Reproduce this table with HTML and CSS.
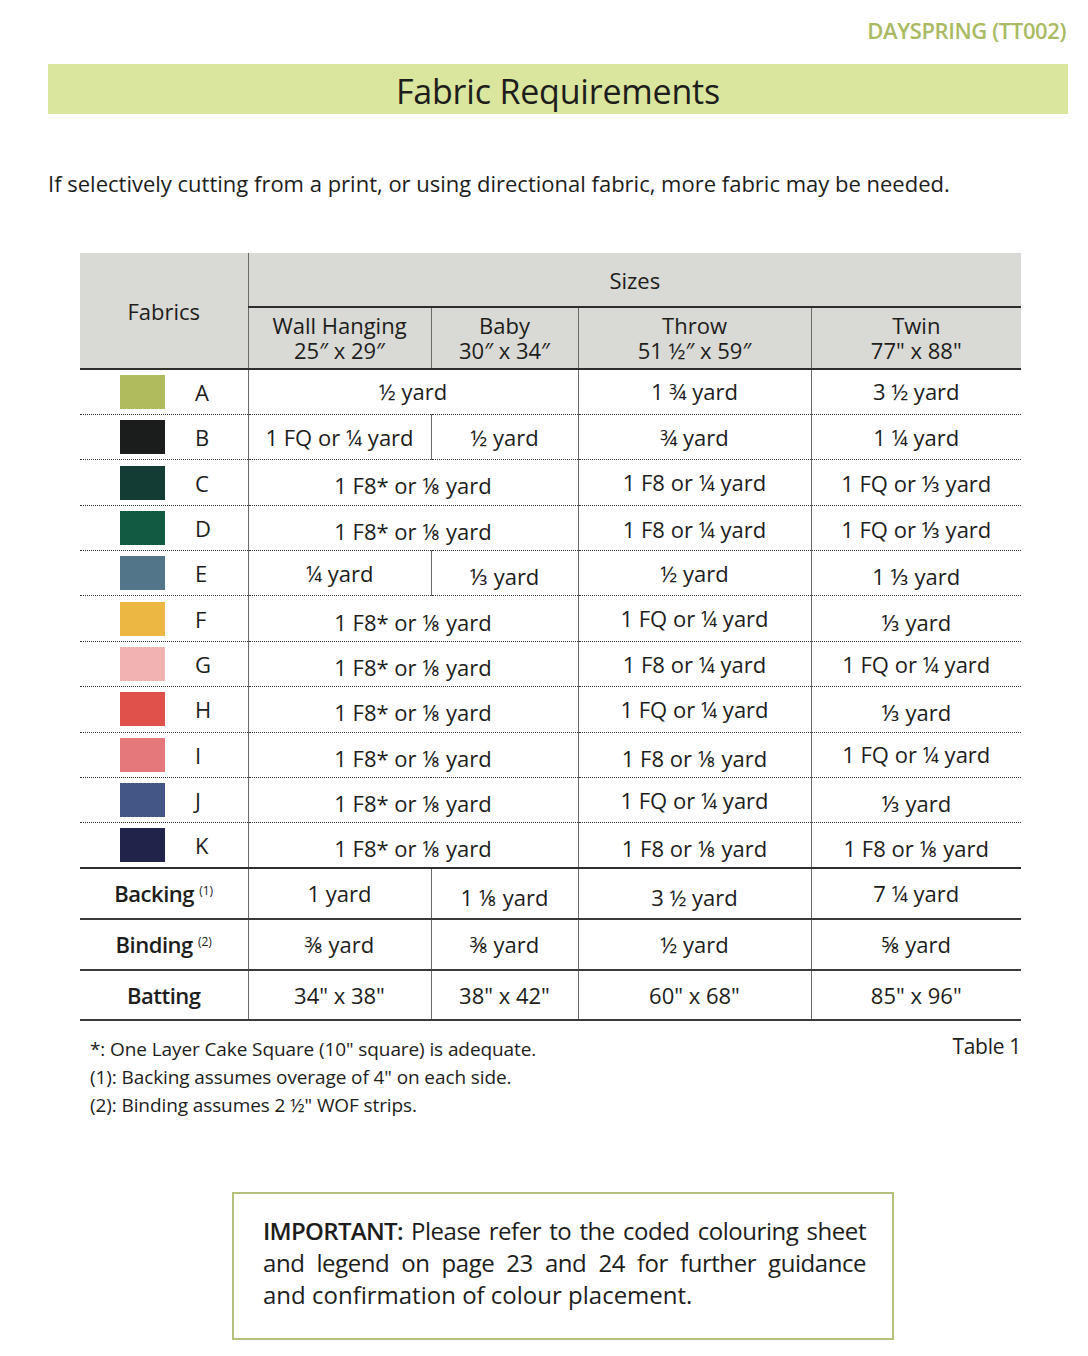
FILE: index.html
```html
<!DOCTYPE html>
<html lang="en">
<head>
<meta charset="utf-8">
<title>Fabric Requirements</title>
<link rel="stylesheet" href="styles.css">
</head>
<body>
<div class="page">
  <div class="brand">DAYSPRING (TT002)</div>
  <h1 class="banner">Fabric Requirements</h1>
  <p class="intro">If selectively cutting from a print, or using directional fabric, more fabric may be needed.</p>

  <table class="req">
    <colgroup>
      <col class="c-fab"><col class="c-wall"><col class="c-baby"><col class="c-throw"><col class="c-twin">
    </colgroup>
    <thead>
      <tr class="h1">
        <th rowspan="2" class="fabh">Fabrics</th>
        <th colspan="4" class="sizes">Sizes</th>
      </tr>
      <tr class="h2">
        <th><span class="hl">Wall Hanging</span><span class="hl">25″ x 29″</span></th>
        <th><span class="hl">Baby</span><span class="hl">30″ x 34″</span></th>
        <th><span class="hl">Throw</span><span class="hl">51 ½″ x 59″</span></th>
        <th><span class="hl">Twin</span><span class="hl">77" x 88"</span></th>
      </tr>
    </thead>
    <tbody>
      <tr class="fr">
        <td class="fab"><span class="sw" style="background:#b0bb5e"></span><span class="lt">A</span></td>
        <td colspan="2">½ yard</td><td>1 ¾ yard</td><td>3 ½ yard</td>
      </tr>
      <tr class="fr">
        <td class="fab"><span class="sw" style="background:#1b1d1d"></span><span class="lt">B</span></td>
        <td class="vl">1 FQ or ¼ yard</td><td>½ yard</td><td>¾ yard</td><td>1 ¼ yard</td>
      </tr>
      <tr class="fr">
        <td class="fab"><span class="sw" style="background:#123c34"></span><span class="lt">C</span></td>
        <td colspan="2" class="dn">1 F8* or ⅛ yard</td><td>1 F8 or ¼ yard</td><td class="dn2">1 FQ or ⅓ yard</td>
      </tr>
      <tr class="fr">
        <td class="fab"><span class="sw" style="background:#135a42"></span><span class="lt">D</span></td>
        <td colspan="2" class="dn">1 F8* or ⅛ yard</td><td class="dn2">1 F8 or ¼ yard</td><td class="dn2">1 FQ or ⅓ yard</td>
      </tr>
      <tr class="fr">
        <td class="fab"><span class="sw" style="background:#52758a"></span><span class="lt">E</span></td>
        <td class="vl">¼ yard</td><td class="dn">⅓ yard</td><td>½ yard</td><td class="dn">1 ⅓ yard</td>
      </tr>
      <tr class="fr">
        <td class="fab"><span class="sw" style="background:#ecb843"></span><span class="lt">F</span></td>
        <td colspan="2" class="dn">1 F8* or ⅛ yard</td><td>1 FQ or ¼ yard</td><td class="dn">⅓ yard</td>
      </tr>
      <tr class="fr">
        <td class="fab"><span class="sw" style="background:#f1b3b2"></span><span class="lt">G</span></td>
        <td colspan="2" class="dn">1 F8* or ⅛ yard</td><td>1 F8 or ¼ yard</td><td>1 FQ or ¼ yard</td>
      </tr>
      <tr class="fr">
        <td class="fab"><span class="sw" style="background:#df514a"></span><span class="lt">H</span></td>
        <td colspan="2" class="dn">1 F8* or ⅛ yard</td><td>1 FQ or ¼ yard</td><td class="dn">⅓ yard</td>
      </tr>
      <tr class="fr">
        <td class="fab"><span class="sw" style="background:#e5787a"></span><span class="lt">I</span></td>
        <td colspan="2" class="dn">1 F8* or ⅛ yard</td><td class="dn">1 F8 or ⅛ yard</td><td>1 FQ or ¼ yard</td>
      </tr>
      <tr class="fr">
        <td class="fab"><span class="sw" style="background:#445686"></span><span class="lt">J</span></td>
        <td colspan="2" class="dn">1 F8* or ⅛ yard</td><td>1 FQ or ¼ yard</td><td class="dn">⅓ yard</td>
      </tr>
      <tr class="fr last">
        <td class="fab"><span class="sw" style="background:#20244a"></span><span class="lt">K</span></td>
        <td colspan="2" class="dn">1 F8* or ⅛ yard</td><td class="dn">1 F8 or ⅛ yard</td><td class="dn">1 F8 or ⅛ yard</td>
      </tr>
      <tr class="xr">
        <td class="lab">Backing <sup>(1)</sup></td>
        <td class="vl">1 yard</td><td class="dn">1 ⅛ yard</td><td class="dn">3 ½ yard</td><td>7 ¼ yard</td>
      </tr>
      <tr class="xr">
        <td class="lab">Binding <sup>(2)</sup></td>
        <td class="vl">⅜ yard</td><td>⅜ yard</td><td>½ yard</td><td>⅝ yard</td>
      </tr>
      <tr class="xr">
        <td class="lab">Batting</td>
        <td class="vl">34" x 38"</td><td>38" x 42"</td><td>60" x 68"</td><td>85" x 96"</td>
      </tr>
    </tbody>
  </table>

  <div class="notes">
    <div class="notelist">
      <p>*: One Layer Cake Square (10" square) is adequate.</p>
      <p>(1): Backing assumes overage of 4" on each side.</p>
      <p>(2): Binding assumes 2 ½" WOF strips.</p>
    </div>
    <div class="tlabel">Table 1</div>
  </div>

  <div class="important">
    <p>
      <span class="jl"><strong>IMPORTANT:</strong> Please refer to the coded colouring sheet</span>
      <span class="jl">and legend on page 23 and 24 for further guidance</span>
      <span class="ll">and confirmation of colour placement.</span>
    </p>
  </div>
</div>
</body>
</html>
```

FILE: styles.css
```css
* { box-sizing: border-box; }
html, body { margin: 0; padding: 0; background: #fff; }
body {
  font-family: "Open Sans", "Noto Sans", "DejaVu Sans", sans-serif;
  color: #1d1d1b;
  width: 1088px;
}
.page { padding: 14px 0 0 0; }

.brand {
  text-align: right;
  padding-right: 22px;
  font-size: 22px;
  font-weight: 600;
  letter-spacing: -0.4px;
  color: #a9ba63;
  line-height: 32px;
}
.banner {
  margin: 18px 20px 0 48px;
  height: 50px;
  background: #dae69e;
  font-weight: 400;
  font-size: 34px;
  line-height: 54px;
  text-align: center;
  letter-spacing: -0.2px;
}
.intro {
  margin: 54px 0 0 48px;
  font-size: 22px;
  line-height: 30px;
  letter-spacing: 0;
}

.req {
  margin: 55px 0 0 80px;
  width: 941px;
  border-collapse: collapse;
  table-layout: fixed;
  font-size: 22px;
}
.c-fab { width: 168px; }
.c-wall { width: 183px; }
.c-baby { width: 147px; }
.c-throw { width: 233px; }
.c-twin { width: 210px; }

.req th {
  background: #d9d9d5;
  font-weight: 400;
  text-align: center;
  padding: 0;
}
.req .h1 th { height: 54px; }
.req .sizes {
  border-bottom: 2px solid #2e2e2e;
  border-left: 1px solid #6a6a6a;
  padding-top: 1px;
  font-size: 22px;
}
.req .fabh {
  font-size: 22px;
  border-bottom: 2px solid #2e2e2e;
  padding-top: 0;
}
.req .h2 th {
  height: 62px;
  border-left: 1px solid #6a6a6a;
  border-bottom: 2px solid #2e2e2e;
  padding-top: 0;
}
.hl {
  display: block;
  height: 25px;
  line-height: 25px;
}

.req td {
  text-align: center;
  padding: 0 0 1px 0;
  border-left: 1px solid #6a6a6a;
  white-space: nowrap;
}
.req td.fab, .req td.lab { border-left: none; }
.fr td {
  height: 45.4px;
  border-bottom: 1px dotted #333;
}
.fr.last td { border-bottom: 2px solid #2e2e2e; }
.xr td {
  height: 50.7px;
  border-bottom: 2px solid #3a3a3a;
}
.req td.dn { padding-top: 7px; }
.req td.dn2 { padding-top: 3px; }

.fab { text-align: left !important; }
.fab .sw {
  display: inline-block;
  vertical-align: middle;
  width: 45px;
  height: 34px;
  margin-left: 40px;
}
.fab .lt {
  display: inline-block;
  vertical-align: middle;
  width: 30px;
  margin-left: 30px;
  text-align: left;
}
.lab {
  font-weight: 600;
  letter-spacing: -0.5px;
}
.lab sup {
  font-size: 12px;
  font-weight: 400;
  vertical-align: 7px;
  line-height: 0;
  letter-spacing: 0;
}

.notes {
  display: flex;
  justify-content: space-between;
  width: 941px;
  margin: 14px 0 0 80px;
  padding-left: 10px;
}
.notelist p {
  margin: 0;
  font-size: 19px;
  line-height: 28px;
  letter-spacing: -0.1px;
}
.tlabel {
  font-size: 21px;
  line-height: 22px;
  letter-spacing: -0.3px;
}

.important {
  margin: 73px 0 20px 232px;
  width: 662px;
  border: 2px solid #b3c17a;
  padding: 21px 26px 27px 29px;
}
.important p {
  margin: 0;
  font-size: 24px;
  line-height: 32px;
  letter-spacing: -0.45px;
  white-space: nowrap;
}
.important .jl {
  display: block;
  text-align: justify;
  text-align-last: justify;
  white-space: normal;
}
.important .ll { display: block; letter-spacing: 0; }
.important strong { font-weight: 600; letter-spacing: -0.7px; }
```
